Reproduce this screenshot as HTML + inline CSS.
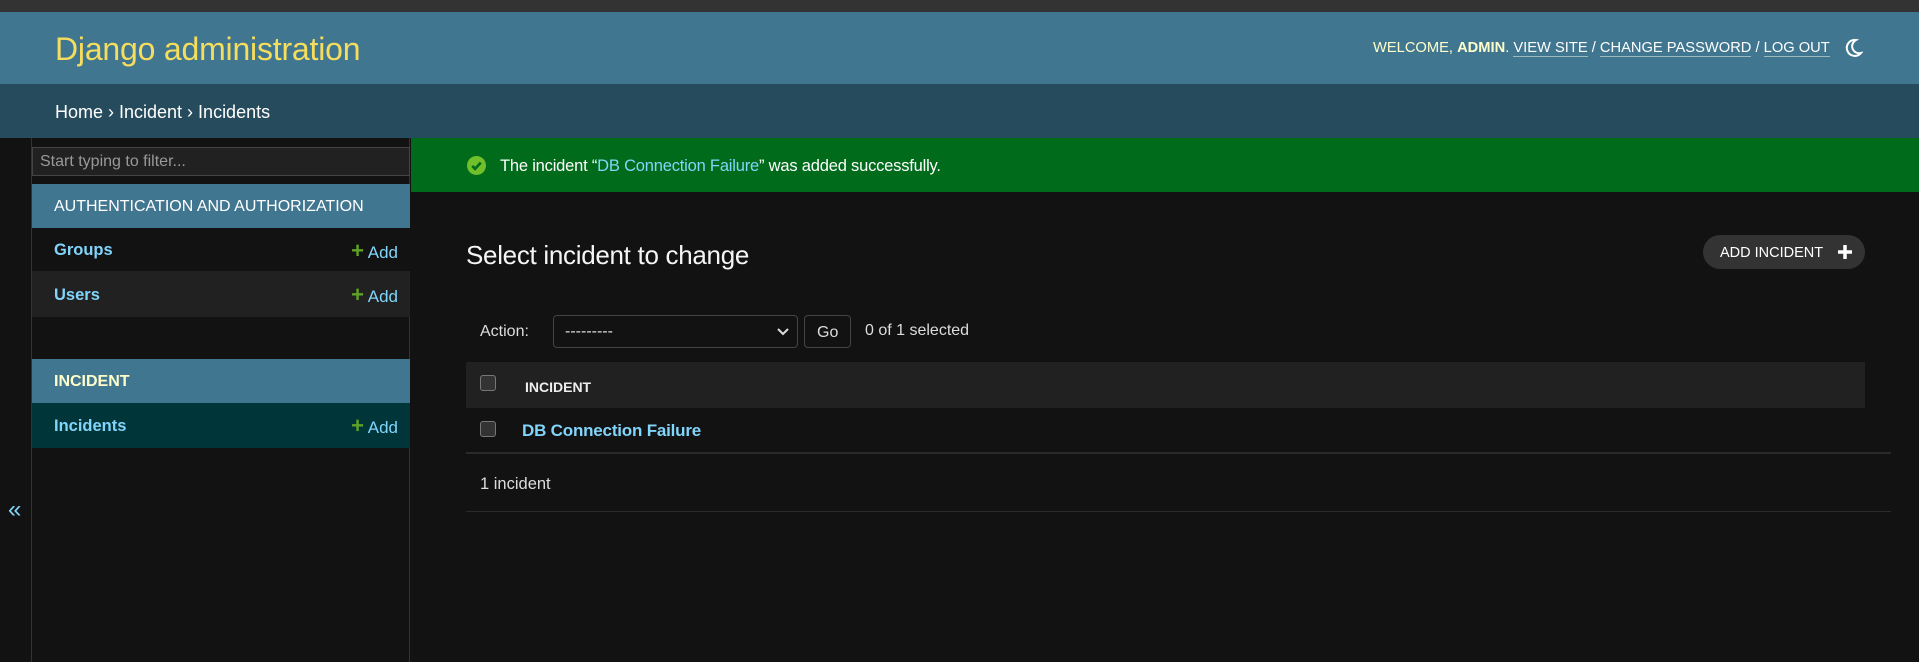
<!DOCTYPE html>
<html><head><meta charset="utf-8"><style>
*{box-sizing:border-box;margin:0;padding:0}
body{width:1919px;height:662px;overflow:hidden;background:#121212;font-family:"Liberation Sans",sans-serif;color:#eee;position:relative}
.a{position:absolute}
a{color:#81d4fa;text-decoration:none}
.add{position:absolute;right:12px;top:11px;color:#81d4fa;font-size:17px}
.add b{color:#5fa225;font-size:22px;position:relative;top:0px}
</style></head><body>
<div class="a" style="left:0;top:0;width:1919px;height:12px;background:#333"></div>
<div class="a" style="left:0;top:12px;width:1919px;height:72px;background:#417690"></div>
<div class="a" style="left:55px;top:31px;font-size:32px;color:#f5dd5d;letter-spacing:-0.2px">Django administration</div>
<div class="a" style="left:1373px;top:40px;font-size:14.7px;color:#fff;letter-spacing:0px;white-space:nowrap">
<span style="color:#ffc">WELCOME, </span><b style="color:#ffc">ADMIN</b>. <span style="border-bottom:1px solid #9bb">VIEW SITE</span> / <span style="border-bottom:1px solid #9bb">CHANGE PASSWORD</span> / <span style="border-bottom:1px solid #9bb">LOG OUT</span></div>
<svg class="a" style="left:1845px;top:38px" width="18" height="20" viewBox="0 0 18 20"><path d="M11 2 A8 8 0 1 0 16 15 A7 7 0 0 1 11 2 Z" fill="none" stroke="#fff" stroke-width="2"/></svg>
<div class="a" style="left:0;top:84px;width:1919px;height:54px;background:#264b5d"></div>
<div class="a" style="left:55px;top:102px;font-size:18px;color:#fff">Home › Incident › Incidents</div>

<div class="a" style="left:0;top:138px;width:32px;height:524px;border-right:1px solid #333"></div>
<div class="a" style="left:8px;top:496px;font-size:24px;color:#81d4fa">«</div>
<div class="a" style="left:32px;top:138px;width:378px;height:524px;border-right:1px solid #333"></div>
<div class="a" style="left:32px;top:147px;width:378px;height:29px;background:#212121;border:1px solid #444;font-size:16px;color:#999;padding:5px 7px">Start typing to filter...</div>
<div class="a" style="left:32px;top:184px;width:378px;height:44px;background:#417690;font-size:16px;color:#fff;padding:14px 22px">AUTHENTICATION AND AUTHORIZATION</div>
<div class="a" style="left:32px;top:228px;width:378px;height:44px;background:#121212;border-bottom:1px solid #222;font-size:16.5px;padding:13px 22px"><a style="font-weight:bold">Groups</a><span class="add" style="top:10px"><b>+</b> Add</span></div>
<div class="a" style="left:32px;top:272px;width:378px;height:45px;background:#212121;border-bottom:1px solid #222;font-size:16.5px;padding:14px 22px"><a style="font-weight:bold">Users</a><span class="add" style="top:10px"><b>+</b> Add</span></div>
<div class="a" style="left:32px;top:359px;width:378px;height:44px;background:#417690;font-size:16px;color:#ffc;font-weight:bold;padding:14px 22px">INCIDENT</div>
<div class="a" style="left:32px;top:403px;width:378px;height:45px;background:#00363a;font-size:16.5px;padding:14px 22px"><a style="font-weight:bold">Incidents</a><span class="add" style="top:10px"><b>+</b> Add</span></div>

<div class="a" style="left:411px;top:138px;width:1508px;height:54px;background:#006b1b"></div>
<svg class="a" style="left:467px;top:156px" width="19" height="19" viewBox="0 0 20 20"><circle cx="10" cy="10" r="10" fill="#70bf2b"/><path d="M5.5 10.5 L8.5 13.5 L14.5 7" fill="none" stroke="#006b1b" stroke-width="2.8"/></svg>
<div class="a" style="left:500px;top:157px;font-size:16.5px;color:#fff;letter-spacing:-0.2px">The incident “<a>DB Connection Failure</a>” was added successfully.</div>

<div class="a" style="left:466px;top:240px;font-size:26px;font-weight:300;color:#f5f5f5;letter-spacing:-0.3px">Select incident to change</div>
<div class="a" style="left:1703px;top:235px;width:162px;height:34px;background:#333;border-radius:17px;font-size:14.5px;color:#fff;padding:10px 0 0 17px">ADD INCIDENT<svg style="position:absolute;right:13px;top:10px" width="14" height="14"><path d="M7 0V14M0 7H14" stroke="#fff" stroke-width="3.5"/></svg></div>

<div class="a" style="left:480px;top:323px;font-size:16px;color:#ddd">Action:</div>
<div class="a" style="left:553px;top:315px;width:245px;height:33px;border:1px solid #444;border-radius:4px;background:#121212;font-size:16px;padding:7px 11px;color:#ddd">---------<svg style="position:absolute;right:8px;top:12px" width="12" height="8"><path d="M1 1 L6 6 L11 1" fill="none" stroke="#ddd" stroke-width="2"/></svg></div>
<div class="a" style="left:804px;top:315px;width:47px;height:33px;border:1px solid #444;border-radius:4px;font-size:16px;padding:8px 0 0 12px;color:#ddd">Go</div>
<div class="a" style="left:865px;top:322px;font-size:16px;color:#ddd">0 of 1 selected</div>

<div class="a" style="left:466px;top:362px;width:1399px;height:46px;background:#212121"></div>
<div class="a" style="left:480px;top:375px;width:16px;height:16px;border:1px solid #777;border-radius:3px;background:#333"></div>
<div class="a" style="left:525px;top:379px;font-size:14px;font-weight:bold;color:#eee">INCIDENT</div>
<div class="a" style="left:480px;top:421px;width:16px;height:16px;border:1px solid #777;border-radius:3px;background:#333"></div>
<div class="a" style="left:522px;top:421px;font-size:17px;font-weight:bold;color:#81d4fa;letter-spacing:-0.2px">DB Connection Failure</div>
<div class="a" style="left:466px;top:452px;width:1425px;height:2px;background:#2a2a2a"></div>
<div class="a" style="left:480px;top:475px;font-size:16.5px;color:#ddd">1 incident</div>
<div class="a" style="left:466px;top:511px;width:1425px;height:1px;background:#2a2a2a"></div>
</body></html>
